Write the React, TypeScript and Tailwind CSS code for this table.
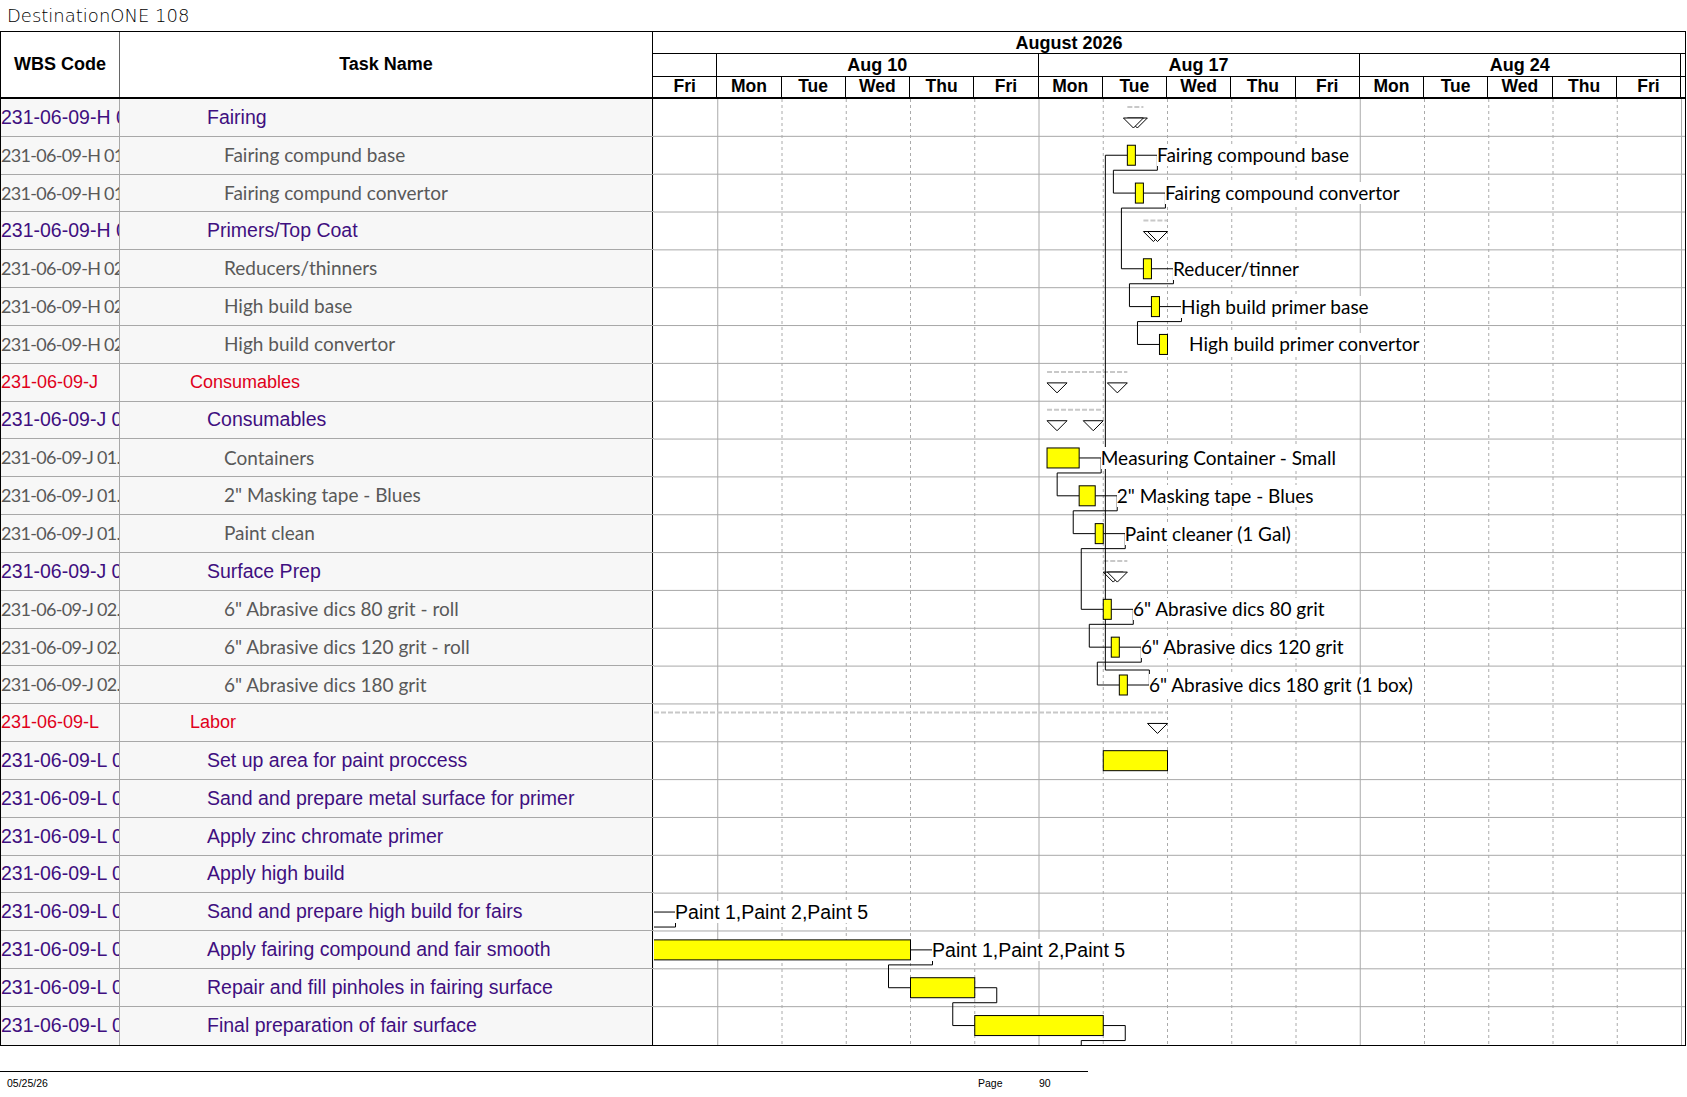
const ROW_H = 37.84;
const DAY_W = 64.25;
const HOUR_W = DAY_W / 8;
const BODY_W = 1032;
const BODY_H = ROW_H * 25;

const xh = (h: number) => h * HOUR_W - 0.5;
const rowTop = (i: number) => i * ROW_H;
const cy = (i: number) => i * ROW_H + 18.4;

type Kind = "red" | "sum" | "leaf";
const ROWS: { wbs: string; name: string; kind: Kind }[] = [
  { wbs: "231-06-09-H 01", name: "Fairing", kind: "sum" },
  { wbs: "231-06-09-H 01.01", name: "Fairing compund base", kind: "leaf" },
  { wbs: "231-06-09-H 01.02", name: "Fairing compund convertor", kind: "leaf" },
  { wbs: "231-06-09-H 02", name: "Primers/Top Coat", kind: "sum" },
  { wbs: "231-06-09-H 02.01", name: "Reducers/thinners", kind: "leaf" },
  { wbs: "231-06-09-H 02.02", name: "High build base", kind: "leaf" },
  { wbs: "231-06-09-H 02.03", name: "High build convertor", kind: "leaf" },
  { wbs: "231-06-09-J", name: "Consumables", kind: "red" },
  { wbs: "231-06-09-J 01", name: "Consumables", kind: "sum" },
  { wbs: "231-06-09-J 01.01", name: "Containers", kind: "leaf" },
  { wbs: "231-06-09-J 01.02", name: '2" Masking tape - Blues', kind: "leaf" },
  { wbs: "231-06-09-J 01.03", name: "Paint clean", kind: "leaf" },
  { wbs: "231-06-09-J 02", name: "Surface Prep", kind: "sum" },
  { wbs: "231-06-09-J 02.01", name: '6" Abrasive dics 80 grit - roll', kind: "leaf" },
  { wbs: "231-06-09-J 02.02", name: '6" Abrasive dics 120 grit - roll', kind: "leaf" },
  { wbs: "231-06-09-J 02.03", name: '6" Abrasive dics 180 grit', kind: "leaf" },
  { wbs: "231-06-09-L", name: "Labor", kind: "red" },
  { wbs: "231-06-09-L 01", name: "Set up area for paint proccess", kind: "sum" },
  { wbs: "231-06-09-L 02", name: "Sand and prepare metal surface for primer", kind: "sum" },
  { wbs: "231-06-09-L 03", name: "Apply zinc chromate primer", kind: "sum" },
  { wbs: "231-06-09-L 04", name: "Apply high build", kind: "sum" },
  { wbs: "231-06-09-L 05", name: "Sand and prepare high build for fairs", kind: "sum" },
  { wbs: "231-06-09-L 06", name: "Apply fairing compound and fair smooth", kind: "sum" },
  { wbs: "231-06-09-L 07", name: "Repair and fill pinholes in fairing surface", kind: "sum" },
  { wbs: "231-06-09-L 08", name: "Final preparation of fair surface", kind: "sum" },
];

type Bar = { row: number; s: number; e: number; label?: string; arial?: boolean; noLead?: boolean };
const BARS: Bar[] = [
  { row: 1, s: 59, e: 60, label: "Fairing compound base" },
  { row: 2, s: 60, e: 61, label: "Fairing compound convertor" },
  { row: 4, s: 61, e: 62, label: "Reducer/tinner" },
  { row: 5, s: 62, e: 63, label: "High build primer base" },
  { row: 6, s: 63, e: 64, label: "High build primer convertor", noLead: true },
  { row: 9, s: 49, e: 53, label: "Measuring Container - Small" },
  { row: 10, s: 53, e: 55, label: '2" Masking tape - Blues' },
  { row: 11, s: 55, e: 56, label: "Paint cleaner (1 Gal)" },
  { row: 13, s: 56, e: 57, label: '6" Abrasive dics 80 grit' },
  { row: 14, s: 57, e: 58, label: '6" Abrasive dics 120 grit' },
  { row: 15, s: 58, e: 59, label: '6" Abrasive dics 180 grit (1 box)' },
  { row: 17, s: 56, e: 64 },
  { row: 21, s: -8, e: 0, label: "Paint 1,Paint 2,Paint 5", arial: true },
  { row: 22, s: -16, e: 32, label: "Paint 1,Paint 2,Paint 5", arial: true },
  { row: 23, s: 32, e: 40 },
  { row: 24, s: 40, e: 56 },
];

const SUMMARIES = [
  { row: 0, s: 59, e: 61 },
  { row: 3, s: 61, e: 64 },
  { row: 7, s: 49, e: 59 },
  { row: 8, s: 49, e: 56 },
  { row: 12, s: 56, e: 59 },
  { row: 16, s: -40, e: 64 },
];

// [from row, to row, target start hour]
const LINKS: [number, number, number][] = [
  [1, 2, 60], [2, 4, 61], [4, 5, 62], [5, 6, 63],
  [9, 10, 53], [10, 11, 55], [11, 13, 56], [13, 14, 57], [14, 15, 58], [15, 1, 59],
  [21, 22, -16], [22, 23, 32], [23, 24, 40], [24, 25, 56],
];

const DAYS = ["Fri", "Mon", "Tue", "Wed", "Thu", "Fri", "Mon", "Tue", "Wed", "Thu", "Fri", "Mon", "Tue", "Wed", "Thu", "Fri"];
const WEEK_LINES = [1, 6, 11, 16];

function linkPath(a: number, b: number, th: number) {
  const bar = BARS.find((x) => x.row === a)!;
  const end = xh(bar.e);
  const bx = xh(th);
  const dy = b > a ? 15 : -15;
  const head = bar.label ? `M ${end + 22} ${cy(a)}` : `M ${end} ${cy(a)} H ${end + 22}`;
  return `${head} V ${cy(a) + dy} H ${bx - 22} V ${cy(b)} H ${bx}`;
}

function GanttBody() {
  return (
    <div className="relative h-[946px] w-[1032px] overflow-hidden bg-white">
      <svg className="absolute inset-0" width={BODY_W} height={BODY_H}>
        {ROWS.slice(0, 24).map((_, i) => (
          <line key={i} x1={0} x2={BODY_W} y1={ROW_H * (i + 1) - 0.5} y2={ROW_H * (i + 1) - 0.5} stroke="#a8a8a8" />
        ))}
        {Array.from({ length: 16 }, (_, k) => k + 1).map((d) => (
          <line
            key={d}
            x1={DAY_W * d - 0.5}
            x2={DAY_W * d - 0.5}
            y1={0}
            y2={BODY_H}
            stroke="#aaaaaa"
            strokeDasharray={WEEK_LINES.includes(d) ? undefined : "3 3"}
          />
        ))}
        {SUMMARIES.map((s) => {
          const x1 = xh(s.s);
          const x2 = xh(s.e);
          const t = rowTop(s.row) + 19;
          return (
            <g key={s.row}>
              <line x1={Math.max(x1, 0)} x2={x2} y1={rowTop(s.row) + 8} y2={rowTop(s.row) + 8} stroke="#c8c8c8" strokeWidth={2} strokeDasharray="5 2" />
              <polygon points={`${x1},${t} ${x1 + 20},${t} ${x1 + 10},${t + 10}`} fill="white" stroke="black" />
              <polygon points={`${x2 - 20},${t} ${x2},${t} ${x2 - 10},${t + 10}`} fill="white" stroke="black" />
            </g>
          );
        })}
        {LINKS.map(([a, b, th]) => (
          <path key={`${a}-${b}`} d={linkPath(a, b, th)} fill="none" stroke="black" />
        ))}
        {BARS.map((b) => (
          <g key={b.row}>
            {b.label && !b.noLead && (
              <line x1={xh(b.e)} x2={xh(b.e) + 22} y1={cy(b.row)} y2={cy(b.row)} stroke="black" />
            )}
            <rect x={xh(b.s)} y={cy(b.row) - 10} width={xh(b.e) - xh(b.s)} height={20} fill="#ffff00" stroke="black" />
          </g>
        ))}
      </svg>
      {BARS.filter((b) => b.label).map((b) => (
        <div
          key={b.row}
          className={`absolute whitespace-nowrap bg-white leading-[22px] text-black ${
            b.arial ? "font-['Liberation_Sans',Arial,sans-serif] text-[19.5px]" : "font-['Lato',sans-serif] text-[19px]"
          }`}
          style={{ left: xh(b.e) + 22, top: cy(b.row) - 11 }}
        >
          {b.label}
        </div>
      ))}
    </div>
  );
}

function TableRow({ row, last }: { row: (typeof ROWS)[number]; last: boolean }) {
  const style =
    row.kind === "red"
      ? "font-['Liberation_Sans',Arial,sans-serif] text-[18px] text-[#e0001b]"
      : row.kind === "sum"
        ? "font-['Liberation_Sans',Arial,sans-serif] text-[19.5px] text-[#3f0f80]"
        : "font-['Lato',sans-serif] text-[19px] text-[#595959]";
  const indent = row.kind === "red" ? "pl-[70px]" : row.kind === "sum" ? "pl-[87px]" : "pl-[104px]";
  return (
    <div className={`flex h-[37.84px] bg-[#f7f7f7] ${last ? "" : "border-b border-[#a8a8a8]"}`}>
      <div
        className={`flex w-[119px] items-center overflow-hidden whitespace-nowrap border-r border-[#a8a8a8] ${style} ${
          row.kind === "leaf" ? "!text-[18px] tracking-[-0.7px]" : ""
        }`}
      >
        {row.wbs}
      </div>
      <div className={`flex w-[533px] items-center overflow-hidden whitespace-nowrap border-r border-black ${indent} ${style}`}>
        {row.name}
      </div>
    </div>
  );
}

function Header() {
  return (
    <div className="flex h-[67px] border-b-2 border-black font-['Liberation_Sans',Arial,sans-serif] text-[18px] font-bold text-black">
      <div className="flex w-[119px] items-center justify-center border-r border-[#666]">WBS Code</div>
      <div className="flex w-[533px] items-center justify-center border-r border-black">Task Name</div>
      <div className="flex w-[1032px] flex-col">
        <div className="flex h-[22px] items-center border-b border-black">
          <div className="w-[832px] text-center leading-none">August 2026</div>
        </div>
        <div className="flex h-[23px] border-b border-black">
          <div className="w-[64.25px] border-r border-black" />
          {["Aug 10", "Aug 17", "Aug 24"].map((w) => (
            <div key={w} className="flex w-[321.25px] items-center justify-center border-r border-black leading-none">
              {w}
            </div>
          ))}
          <div className="flex-1" />
        </div>
        <div className="flex h-[20px]">
          {DAYS.map((d, i) => (
            <div key={i} className="flex w-[64.25px] items-center justify-center border-r border-black text-[17.5px] leading-none">
              {d}
            </div>
          ))}
          <div className="flex-1" />
        </div>
      </div>
    </div>
  );
}

export default function App() {
  return (
    <div className="relative h-[1097px] w-[1687px] overflow-hidden bg-white">
      <div className="flex h-[31px] items-center pl-[7px] font-['DejaVu_Sans',sans-serif] text-[18px] font-extralight text-black">
        DestinationONE 108
      </div>
      <div className="w-[1686px] border border-black">
        <Header />
        <div className="flex">
          <div className="flex w-[653px] flex-col">
            {ROWS.map((r, i) => (
              <TableRow key={i} row={r} last={i === ROWS.length - 1} />
            ))}
          </div>
          <GanttBody />
        </div>
      </div>
      <div className="mt-[25px] w-[1088px] border-t border-black" />
      <div className="flex h-[24px] items-center pl-[7px] font-['Liberation_Sans',Arial,sans-serif] text-[10.5px] text-black">
        <span className="w-[971px]">05/25/26</span>
        <span className="w-[61px]">Page</span>
        <span>90</span>
      </div>
    </div>
  );
}
